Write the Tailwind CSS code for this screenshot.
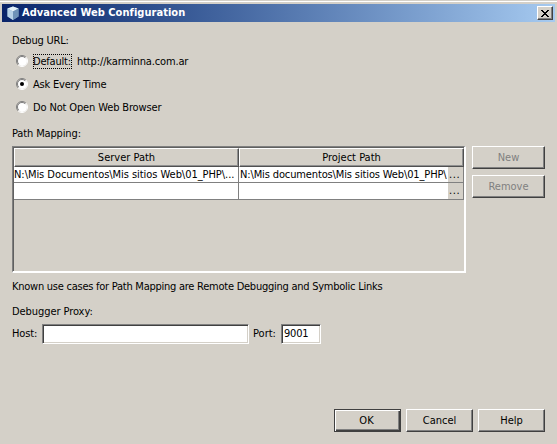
<!DOCTYPE html>
<html lang="en">
<head>
<meta charset="utf-8">
<title>Advanced Web Configuration</title>
<script src="https://cdn.jsdelivr.net/npm/@tailwindcss/browser@4"></script>
</head>
<body class="w-[557px] h-[444px] overflow-hidden bg-[#d4d0c8] font-['DejaVu_Sans_Condensed','DejaVu_Sans',sans-serif] [font-stretch:condensed] text-[11px] leading-[16px] text-black whitespace-nowrap">
<div class="h-[444px] flex flex-col pt-px">
  <div class="h-px bg-white shrink-0"></div>
  <header class="mt-[2px] mx-[2px] h-[18px] shrink-0 flex items-center pl-[4px] pr-[2px] bg-linear-to-r from-[#0a246a] to-[#a6caf0] text-white font-bold">
    <svg class="w-[14px] h-[16px]" viewBox="0 0 14 16"><path d="M7 1.5 12.5 3.5V11.5L7 15 1.5 11.5V3.5Z" fill="#88a9c8"/><path d="M7 1.5 12.5 3.5 7 6.5 1.5 3.5Z" fill="#e4f1fa"/><path d="M1.5 3.5 7 6.5V15L1.5 11.5Z" fill="#b8d3e8"/><path d="M7 6.5 12.5 3.5V11.5L7 15Z" fill="#6f93b8"/></svg>
    <h1 class="ml-[2px] tracking-[0.04px]">Advanced Web Configuration</h1>
    <button class="ml-auto w-[16px] h-[14px] bg-[#d4d0c8] border border-t-white border-l-white border-r-[#404040] border-b-[#404040] shadow-[inset_-1px_-1px_#808080] flex items-center justify-center"><svg class="w-[8px] h-[7px]" viewBox="0 0 8 7" shape-rendering="crispEdges"><path d="M0 0h2v1h1v1h2v-1h1v-1h2v1h-1v1h-1v1h-1v1h1v1h1v1h1v1h-2v-1h-1v-1h-2v1h-1v1h-2v-1h1v-1h1v-1h1v-1h-1v-1h-1v-1h-1z"/></svg></button>
  </header>
  <main class="pl-[12px] pr-[12px] pt-[11px] flex flex-col flex-1">
    <div class="h-[16px]"><span class="tracking-[-0.2px]">Debug URL:</span></div>
    <div class="h-[23px] pl-[4px] mt-px flex items-center">
      <svg class="w-[12px] h-[12px] mb-[2px]" viewBox="0 0 12 12"><circle cx="6" cy="6" r="5" fill="#fff"/><path d="M2.1 9.9A5.5 5.5 0 0 1 9.9 2.1" fill="none" stroke="#808080"/><path d="M2.8 9.2A4.5 4.5 0 0 1 9.2 2.8" fill="none" stroke="#606060" stroke-width=".8"/><path d="M9.9 2.1A5.5 5.5 0 0 1 2.1 9.9" fill="none" stroke="#fff"/></svg>
      <span class="ml-[5px] w-[39px] h-[15px] leading-[15px] outline-1 outline-dotted outline-black -outline-offset-1 tracking-[-0.2px]">Default:</span><span class="ml-[5px] tracking-[-0.14px]">http://karminna.com.ar</span>
    </div>
    <div class="h-[23px] pl-[4px] flex items-center">
      <svg class="w-[12px] h-[12px] mb-[2px]" viewBox="0 0 12 12"><circle cx="6" cy="6" r="5" fill="#fff"/><path d="M2.1 9.9A5.5 5.5 0 0 1 9.9 2.1" fill="none" stroke="#808080"/><path d="M2.8 9.2A4.5 4.5 0 0 1 9.2 2.8" fill="none" stroke="#606060" stroke-width=".8"/><path d="M9.9 2.1A5.5 5.5 0 0 1 2.1 9.9" fill="none" stroke="#fff"/><circle cx="6" cy="6" r="2"/></svg>
      <span class="ml-[5px] tracking-[-0.2px]">Ask Every Time</span>
    </div>
    <div class="h-[23px] pl-[4px] flex items-center">
      <svg class="w-[12px] h-[12px] mb-[2px]" viewBox="0 0 12 12"><circle cx="6" cy="6" r="5" fill="#fff"/><path d="M2.1 9.9A5.5 5.5 0 0 1 9.9 2.1" fill="none" stroke="#808080"/><path d="M2.8 9.2A4.5 4.5 0 0 1 9.2 2.8" fill="none" stroke="#606060" stroke-width=".8"/><path d="M9.9 2.1A5.5 5.5 0 0 1 2.1 9.9" fill="none" stroke="#fff"/></svg>
      <span class="ml-[5px] tracking-[-0.14px]">Do Not Open Web Browser</span>
    </div>
    <div class="h-[16px] mt-[7px]"><span class="tracking-[-0.14px]">Path Mapping:</span></div>
    <div class="mt-[4px] flex">
      <section class="w-[454px] h-[127px] border-t border-l border-[#808080] border-r-2 border-b-2 border-r-white border-b-white">
        <div class="h-[124px] border-t border-l border-[#606060]">
          <div class="grid grid-cols-[225px_225px] h-[19px] text-center">
            <div class="bg-[#d4d0c8] border-t border-l border-t-white border-l-white border-r border-b border-r-[#505050] border-b-[#505050] shadow-[inset_-1px_-1px_#909090] leading-[17px]"><span>Server Path</span></div>
            <div class="bg-[#d4d0c8] border-t border-l border-t-white border-l-white border-r border-b border-r-[#505050] border-b-[#505050] shadow-[inset_-1px_-1px_#909090] leading-[17px]"><span>Project Path</span></div>
          </div>
          <div class="grid grid-cols-[225px_209px_16px] h-[16px] leading-[15px]">
            <div class="bg-white border-r border-b border-[#808080]"><span class="tracking-[-0.05px]">N:\Mis Documentos\Mis sitios Web\01_PHP\...</span></div>
            <div class="bg-white border-b border-[#808080] pl-px"><span class="tracking-[-0.13px]">N:\Mis documentos\Mis sitios Web\01_PHP\</span></div>
            <div class="border-r border-b border-[#808080] pl-px"><span class="tracking-[0.6px]">...</span></div>
          </div>
          <div class="grid grid-cols-[225px_209px_16px] h-[16px] leading-[16px]">
            <div class="bg-white border-r border-b border-[#808080]"></div>
            <div class="bg-white border-b border-[#808080]"></div>
            <div class="border-r border-b border-[#808080] pl-px"><span class="tracking-[0.6px]">...</span></div>
          </div>
        </div>
      </section>
      <div class="ml-[6px] flex flex-col gap-[6px] text-[#808080] [text-shadow:1px_1px_#fff]">
        <button class="w-[73px] h-[23px] border border-t-white border-l-white border-r-[#404040] border-b-[#404040] shadow-[inset_-1px_-1px_#808080]"><span>New</span></button>
        <button class="w-[73px] h-[23px] border border-t-white border-l-white border-r-[#404040] border-b-[#404040] shadow-[inset_-1px_-1px_#808080]"><span>Remove</span></button>
      </div>
    </div>
    <div class="h-[16px] mt-[6px]"><span class="tracking-[-0.25px]">Known use cases for Path Mapping are Remote Debugging and Symbolic Links</span></div>
    <div class="h-[16px] mt-[9px]"><span class="tracking-[-0.07px]">Debugger Proxy:</span></div>
    <div class="mt-[4px] h-[20px] flex items-center">
      <label class="w-[30px]"><span class="tracking-[-0.15px]">Host:</span></label>
      <div class="w-[207px] h-[20px] bg-white border border-t-[#808080] border-l-[#808080] border-r-white border-b-white shadow-[inset_1px_1px_#404040,inset_-1px_-1px_#d4d0c8]"></div>
      <label class="ml-[4px] w-[28px]"><span>Port:</span></label>
      <div class="w-[40px] h-[20px] leading-[18px] pl-[2px] bg-white border border-t-[#808080] border-l-[#808080] border-r-white border-b-white shadow-[inset_1px_1px_#404040,inset_-1px_-1px_#d4d0c8]"><span class="tracking-[-0.2px]">9001</span></div>
    </div>
    <footer class="mt-auto mb-[12px] flex justify-end gap-[5px]">
      <button class="w-[67px] h-[23px] pr-[2px] border border-[#404040] shadow-[inset_1px_1px_#fff,inset_-1px_-1px_#404040,inset_-2px_-2px_#808080]"><span>OK</span></button>
      <button class="w-[67px] h-[23px] border border-t-white border-l-white border-r-[#404040] border-b-[#404040] shadow-[inset_-1px_-1px_#808080]"><span>Cancel</span></button>
      <button class="w-[67px] h-[23px] border border-t-white border-l-white border-r-[#404040] border-b-[#404040] shadow-[inset_-1px_-1px_#808080]"><span>Help</span></button>
    </footer>
  </main>
</div>
</body>
</html>
